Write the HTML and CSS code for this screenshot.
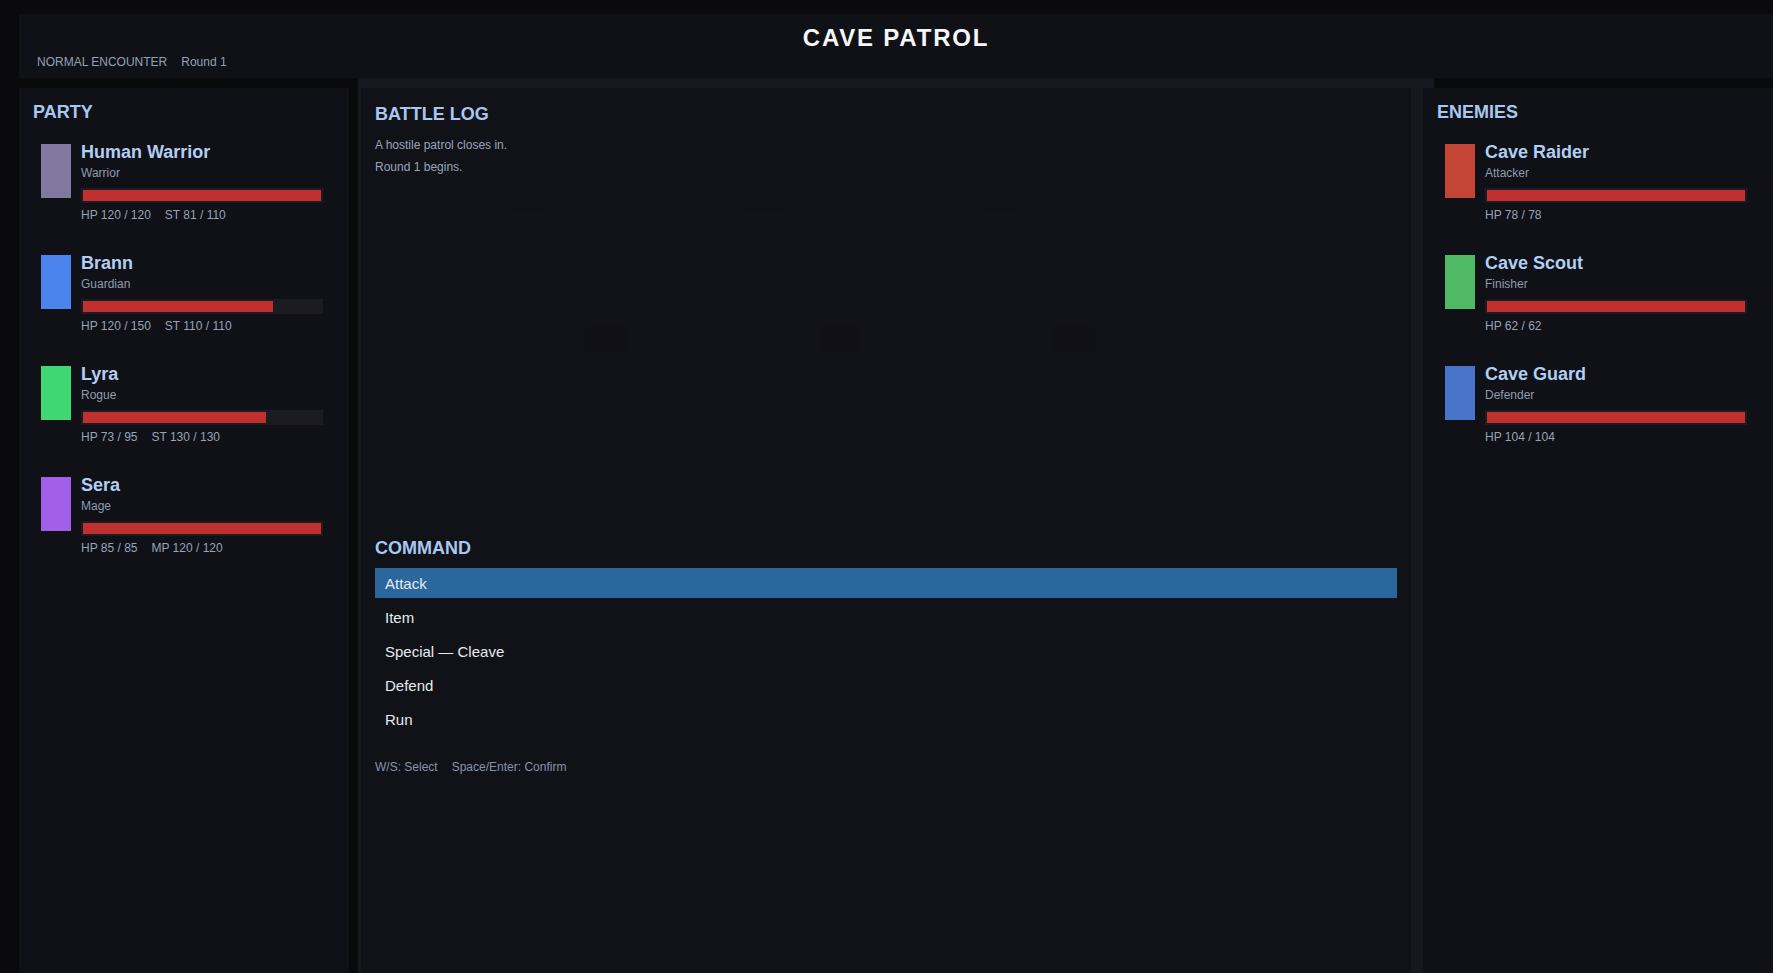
FILE: index.html
```html
<!DOCTYPE html>
<html lang="en">
<head>
  <meta charset="UTF-8">
  <meta name="viewport" content="width=device-width, initial-scale=1.0">
  <title>Cave Patrol</title>
  <link rel="stylesheet" href="styles.css">
</head>
<body>
  <header class="top-bar">
    <h1>CAVE PATROL</h1>
    <div class="encounter">
      <span>NORMAL ENCOUNTER</span>
      <span>Round 1</span>
    </div>
  </header>

  <main class="battle">
    <section class="side-panel party">
      <h2>PARTY</h2>
      <div class="roster">
        <div class="unit">
          <div class="swatch swatch-warrior"></div>
          <div class="unit-info">
            <div class="unit-name">Human Warrior</div>
            <div class="unit-role">Warrior</div>
            <div class="hp-track"><div class="hp-fill" style="width: 100%"></div></div>
            <div class="unit-stats"><span>HP 120 / 120</span><span>ST 81 / 110</span></div>
          </div>
        </div>
        <div class="unit">
          <div class="swatch swatch-guardian"></div>
          <div class="unit-info">
            <div class="unit-name">Brann</div>
            <div class="unit-role">Guardian</div>
            <div class="hp-track"><div class="hp-fill" style="width: 80%"></div></div>
            <div class="unit-stats"><span>HP 120 / 150</span><span>ST 110 / 110</span></div>
          </div>
        </div>
        <div class="unit">
          <div class="swatch swatch-rogue"></div>
          <div class="unit-info">
            <div class="unit-name">Lyra</div>
            <div class="unit-role">Rogue</div>
            <div class="hp-track"><div class="hp-fill" style="width: 76.84%"></div></div>
            <div class="unit-stats"><span>HP 73 / 95</span><span>ST 130 / 130</span></div>
          </div>
        </div>
        <div class="unit">
          <div class="swatch swatch-mage"></div>
          <div class="unit-info">
            <div class="unit-name">Sera</div>
            <div class="unit-role">Mage</div>
            <div class="hp-track"><div class="hp-fill" style="width: 100%"></div></div>
            <div class="unit-stats"><span>HP 85 / 85</span><span>MP 120 / 120</span></div>
          </div>
        </div>
      </div>
    </section>

    <div class="center-column">
      <section class="center-panel">
        <h2>BATTLE LOG</h2>
        <div class="log">
          <!-- unit markers on the field, barely visible behind the log -->
          <div class="marker foe" style="left: 133px; top: 75px"></div>
          <div class="marker foe" style="left: 368px; top: 75px"></div>
          <div class="marker foe" style="left: 602px; top: 75px"></div>
          <div class="marker ally" style="left: 210px; top: 185px"></div>
          <div class="marker ally" style="left: 444px; top: 185px"></div>
          <div class="marker ally" style="left: 678px; top: 185px"></div>
          <p>A hostile patrol closes in.</p>
          <p>Round 1 begins.</p>
        </div>

        <div class="command">
          <h2>COMMAND</h2>
          <ul class="command-list">
            <li class="selected">Attack</li>
            <li>Item</li>
            <li>Special — Cleave</li>
            <li>Defend</li>
            <li>Run</li>
          </ul>
          <div class="hints">
            <span>W/S: Select</span>
            <span>Space/Enter: Confirm</span>
          </div>
        </div>
      </section>
    </div>

    <section class="side-panel enemies">
      <h2>ENEMIES</h2>
      <div class="roster">
        <div class="unit">
          <div class="swatch swatch-raider"></div>
          <div class="unit-info">
            <div class="unit-name">Cave Raider</div>
            <div class="unit-role">Attacker</div>
            <div class="hp-track"><div class="hp-fill" style="width: 100%"></div></div>
            <div class="unit-stats"><span>HP 78 / 78</span></div>
          </div>
        </div>
        <div class="unit">
          <div class="swatch swatch-scout"></div>
          <div class="unit-info">
            <div class="unit-name">Cave Scout</div>
            <div class="unit-role">Finisher</div>
            <div class="hp-track"><div class="hp-fill" style="width: 100%"></div></div>
            <div class="unit-stats"><span>HP 62 / 62</span></div>
          </div>
        </div>
        <div class="unit">
          <div class="swatch swatch-guard"></div>
          <div class="unit-info">
            <div class="unit-name">Cave Guard</div>
            <div class="unit-role">Defender</div>
            <div class="hp-track"><div class="hp-fill" style="width: 100%"></div></div>
            <div class="unit-stats"><span>HP 104 / 104</span></div>
          </div>
        </div>
      </div>
    </section>
  </main>
</body>
</html>
```

FILE: styles.css
```css
* {
  box-sizing: border-box;
}
html, body {
  height: 100%;
  overflow: hidden;
}
body {
  font-family: "Liberation Sans", Arial, sans-serif;
  margin: 0;
  padding: 14px 0 0 19px;
  background: #0a0a0d;
  color: #98a3b6;
  display: flex;
  flex-direction: column;
}
.top-bar {
  background: #0f1116;
  padding: 10px 18px 9px;
}
.top-bar h1 {
  margin: 0 0 3px;
  font-size: 24px;
  line-height: 28px;
  letter-spacing: 1.8px;
  text-align: center;
  color: #f4f6f8;
}
.encounter {
  display: flex;
  gap: 14px;
  font-size: 12px;
  line-height: 14px;
  color: #94a0b6;
}
.battle {
  flex: 1;
  display: flex;
  min-height: 0;
}
h2 {
  margin: 0 0 13px;
  font-size: 18px;
  line-height: 21px;
  color: #a9c8f0;
}
.side-panel {
  background: #0f1116;
  margin-top: 10px;
  padding: 14px;
}
.party {
  width: 330px;
  margin-right: 9px;
}
.enemies {
  width: 350px;
  margin-left: -11px;
}
.roster {
  padding-top: 6px;
}
.unit {
  display: flex;
  gap: 10px;
  padding: 0 12px 0 8px;
  margin-bottom: 31px;
}
.swatch {
  width: 30px;
  height: 54px;
  margin-top: 2px;
  flex-shrink: 0;
}
.swatch-warrior { background: #81799f; }
.swatch-guardian { background: #4a84ec; }
.swatch-rogue { background: #3fd771; }
.swatch-mage { background: #a25fe8; }
.swatch-raider { background: #c44535; }
.swatch-scout { background: #4fba63; }
.swatch-guard { background: #4a74c9; }
.unit-info {
  flex: 1;
}
.unit-name {
  font-size: 18px;
  line-height: 21px;
  font-weight: bold;
  color: #b2cef2;
  margin-bottom: 3px;
}
.unit-role {
  font-size: 12px;
  line-height: 14px;
  color: #8f9bb0;
  margin-bottom: 8px;
}
.hp-track {
  height: 15px;
  padding: 2px;
  background: #1c1b21;
  margin-bottom: 5px;
}
.hp-fill {
  height: 100%;
  background: #c0302f;
}
.unit-stats {
  display: flex;
  gap: 14px;
  font-size: 12px;
  line-height: 14px;
  color: #98a3b6;
}
.center-column {
  width: 1076px;
  flex-shrink: 0;
  background: #17171f;
  padding: 10px 23px 0 3px;
}
.center-panel {
  height: 100%;
  background: #111218;
  padding: 16px 14px 0;
}
.log {
  position: relative;
  height: 380px;
  font-size: 12px;
  line-height: 14px;
  color: #9aa5b8;
}
.log p {
  position: relative;
  margin: 0 0 8px;
}
.marker {
  position: absolute;
  width: 42px;
  height: 28px;
}
.marker.foe {
  background: rgba(255, 255, 255, 0.007);
}
.marker.ally {
  background: rgba(0, 0, 0, 0.06);
}
.command {
  margin-top: 20px;
}
.command h2 {
  margin-bottom: 9px;
}
.command-list {
  list-style: none;
  margin: 0;
  padding: 0;
  display: flex;
  flex-direction: column;
  gap: 4px;
}
.command-list li {
  height: 30px;
  display: flex;
  align-items: center;
  padding-left: 10px;
  font-size: 15px;
  color: #e6ebf2;
}
.command-list li.selected {
  background: #29679c;
}
.hints {
  margin-top: 26px;
  display: flex;
  gap: 14px;
  font-size: 12px;
  line-height: 14px;
  color: #8793a8;
}
```
